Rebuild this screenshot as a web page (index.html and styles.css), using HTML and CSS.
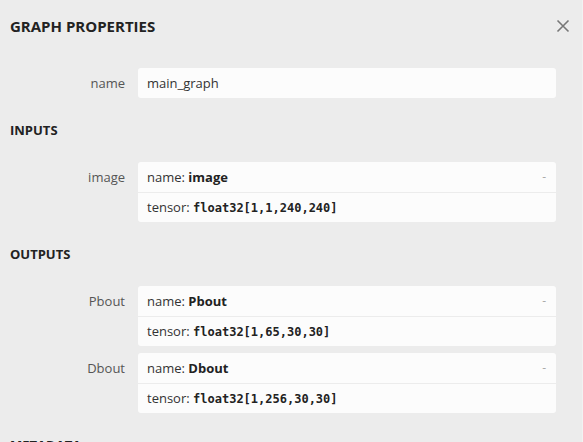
FILE: index.html
```html
<!DOCTYPE html>
<html>
<head>
  <title>Graph Properties</title>
  <link rel="stylesheet" href="styles.css">
</head>
<body>
  <div class="sidebar">
    <div class="sidebar-title">
      <span>GRAPH PROPERTIES</span>
      <button class="sidebar-closebutton" title="Close">
        <svg width="14" height="14" viewBox="0 0 14 14">
          <path d="M1.5 1.5 L12.5 12.5 M12.5 1.5 L1.5 12.5" stroke="currentColor" stroke-width="1.6" fill="none"/>
        </svg>
      </button>
    </div>

    <div class="sidebar-content">
      <div class="sidebar-item first">
        <div class="sidebar-item-name">name</div>
        <div class="sidebar-item-value">
          <div class="value-line">main_graph</div>
        </div>
      </div>

      <!-- Inputs -->
      <div class="sidebar-header">INPUTS</div>
      <div class="sidebar-item">
        <div class="sidebar-item-name">image</div>
        <div class="sidebar-item-value">
          <div class="value-expander">-</div>
          <div class="value-line">name: <b>image</b></div>
          <div class="value-line border">tensor: <code>float32[1,1,240,240]</code></div>
        </div>
      </div>

      <!-- Outputs -->
      <div class="sidebar-header">OUTPUTS</div>
      <div class="item-list">
        <div class="sidebar-item">
          <div class="sidebar-item-name">Pbout</div>
          <div class="sidebar-item-value">
            <div class="value-expander">-</div>
            <div class="value-line">name: <b>Pbout</b></div>
            <div class="value-line border">tensor: <code>float32[1,65,30,30]</code></div>
          </div>
        </div>
        <div class="sidebar-item">
          <div class="sidebar-item-name">Dbout</div>
          <div class="sidebar-item-value">
            <div class="value-expander">-</div>
            <div class="value-line">name: <b>Dbout</b></div>
            <div class="value-line border">tensor: <code>float32[1,256,30,30]</code></div>
          </div>
        </div>
      </div>

      <div class="sidebar-header">METADATA</div>
    </div>
  </div>
</body>
</html>
```

FILE: styles.css
```css
html, body {
  margin: 0;
  height: 100%;
  overflow: hidden;
}
body {
  font-family: "Open Sans", "Noto Sans", sans-serif;
  font-size: 13px;
  background: #ececec;
  color: #333;
}
.sidebar {
  height: 100%;
  border-right: 1px solid #f2f2f2;
  box-sizing: border-box;
}
.sidebar-title {
  height: 52px;
  display: flex;
  align-items: center;
  justify-content: space-between;
  padding: 0 12px 0 10px;
  font-size: 15px;
  font-weight: bold;
  color: #222;
}
.sidebar-closebutton {
  background: none;
  border: none;
  padding: 0;
  width: 14px;
  height: 14px;
  color: #777;
  cursor: pointer;
}
.sidebar-closebutton svg {
  display: block;
}
.sidebar-content {
  padding: 16px 26px 0 10px;
}
.sidebar-header {
  padding: 22px 0;
  line-height: 20px;
  font-weight: bold;
  font-size: 13px;
  color: #222;
}
.item-list {
  display: flex;
  flex-direction: column;
  gap: 7px;
}
.sidebar-item {
  display: flex;
}
.sidebar-item-name {
  width: 115px;
  margin-right: 13px;
  text-align: right;
  line-height: 30px;
  color: #555;
}
.sidebar-item-value {
  flex: 1;
  position: relative;
  background: #fcfcfc;
  border-radius: 3px;
}
.value-line {
  height: 30px;
  line-height: 30px;
  padding-left: 9px;
}
.value-line.border {
  border-top: 1px solid #ececec;
  height: 29px;
  line-height: 29px;
}
.value-line b {
  color: #222;
}
.value-line code {
  font-family: "DejaVu Sans Mono", monospace;
  font-size: 12px;
  font-weight: bold;
  color: #222;
}
.value-expander {
  position: absolute;
  right: 10px;
  top: 6px;
  color: #aaa;
  font-size: 12px;
}
```
